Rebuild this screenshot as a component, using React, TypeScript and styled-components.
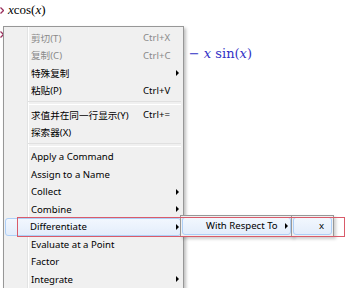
import styled, { createGlobalStyle } from "styled-components"

const GlobalStyle = createGlobalStyle`
  html, body {
    margin: 0;
    padding: 0;
    background: #ffffff;
  }
  * {
    box-sizing: border-box;
  }
`

type MenuEntry =
  | { kind: "sep" }
  | {
      kind: "item"
      label: string
      shortcut?: string
      arrow?: boolean
      disabled?: boolean
      cjk?: boolean
      active?: boolean
    }

const entries: MenuEntry[] = [
  { kind: "item", label: "剪切(T)", shortcut: "Ctrl+X", disabled: true, cjk: true },
  { kind: "item", label: "复制(C)", shortcut: "Ctrl+C", disabled: true, cjk: true },
  { kind: "item", label: "特殊复制", arrow: true, cjk: true },
  { kind: "item", label: "粘贴(P)", shortcut: "Ctrl+V", cjk: true },
  { kind: "sep" },
  { kind: "item", label: "求值并在同一行显示(Y)", shortcut: "Ctrl+=", cjk: true },
  { kind: "item", label: "探索器(X)", cjk: true },
  { kind: "sep" },
  { kind: "item", label: "Apply a Command" },
  { kind: "item", label: "Assign to a Name" },
  { kind: "item", label: "Collect", arrow: true },
  { kind: "item", label: "Combine", arrow: true },
  { kind: "item", label: "Differentiate", arrow: true, active: true },
  { kind: "item", label: "Evaluate at a Point" },
  { kind: "item", label: "Factor" },
  { kind: "item", label: "Integrate", arrow: true },
]

const Sheet = styled.div`
  position: relative;
  width: 347px;
  height: 288px;
  overflow: hidden;
  background: #ffffff;
`

const InputLine = styled.div`
  display: flex;
  align-items: center;
  gap: 4px;
  height: 20px;
`

const PromptRow = styled.div`
  display: flex;
  align-items: center;
  height: 14px;
  margin-top: 7px;
`

const Prompt = () => (
  <svg width="4" height="7" viewBox="0 0 4 7">
    <path d="M0.5 0.5 L3.5 3.5 L0.5 6.5" fill="none" stroke="#9b2f5c" strokeWidth="1.3" />
  </svg>
)

const InputMath = styled.span`
  font-family: "Liberation Serif", serif;
  font-size: 13px;
  color: #000000;
  i {
    font-style: italic;
  }
`

const OutputLine = styled.div`
  height: 20px;
  margin-top: 3px;
  padding-right: 95px;
  text-align: right;
  font-family: "DejaVu Serif", serif;
  font-size: 13px;
  line-height: 20px;
  color: #3131c6;
  i {
    font-style: italic;
  }
`

const Menu = styled.div`
  position: absolute;
  left: 3px;
  top: 26px;
  width: 181px;
  padding: 2px;
  border: 1px solid #979797;
  background:
    linear-gradient(
      to right,
      transparent 0 23px,
      #e2e3e3 23px 24px,
      #ffffff 24px 25px,
      transparent 25px
    ),
    #f0f0f0;
  box-shadow: 2px 2px 3px rgba(0, 0, 0, 0.25);
`

const Row = styled.div<{ $active?: boolean; $disabled?: boolean }>`
  display: grid;
  grid-template-columns: 112px 1fr 12px;
  align-items: center;
  height: 17.5px;
  padding-left: 24px;
  font-family: "Noto Sans", "Noto Sans CJK SC", sans-serif;
  font-size: 9.6px;
  white-space: nowrap;
  color: ${(p) => (p.$disabled ? "#8a8a8a" : "#000000")};
  border: 1px solid ${(p) => (p.$active ? "#aecff7" : "transparent")};
  border-radius: 3px;
  margin-left: ${(p) => (p.$active ? "-1px" : "0")};
  background: ${(p) =>
    p.$active ? "linear-gradient(to bottom, #f2f7fe, #e3edfb)" : "transparent"};
`

const Label = styled.span<{ $cjk?: boolean }>`
  font-size: ${(p) => (p.$cjk ? "9.6px" : "9.6px")};
`

const Shortcut = styled.span``

const Arrow = styled.span`
  justify-self: start;
  margin-left: 8px;
  width: 0;
  height: 0;
  border-top: 3px solid transparent;
  border-bottom: 3px solid transparent;
  border-left: 3px solid #000000;
`

const Separator = styled.div`
  height: 7px;
  margin-left: 22px;
  display: flex;
  align-items: center;
  &::after {
    content: "";
    flex: 1;
    height: 2px;
    border-top: 1px solid #e0e0e0;
    border-bottom: 1px solid #ffffff;
  }
`

const SubMenu = styled.div<{ $left: number; $width: number }>`
  position: absolute;
  top: 215px;
  left: ${(p) => p.$left}px;
  width: ${(p) => p.$width}px;
  padding: 1px;
  border: 1px solid #979797;
  background: #f0f0f0;
  box-shadow: 2px 2px 3px rgba(0, 0, 0, 0.2);
`

const SubItem = styled.div<{ $pad: number }>`
  display: flex;
  align-items: center;
  justify-content: space-between;
  height: 17.5px;
  padding: 0 2px 0 ${(p) => p.$pad}px;
  border: 1px solid #aecff7;
  border-radius: 3px;
  background: linear-gradient(to bottom, #f2f7fe, #e3edfb);
  font-family: "Noto Sans", sans-serif;
  font-size: 9.6px;
  color: #000000;
  white-space: nowrap;
`

const SubArrow = styled(Arrow)`
  margin-left: 0;
`

const Annotation = styled.div`
  position: absolute;
  left: 17px;
  top: 217px;
  width: 328px;
  height: 20px;
  border: 1px solid #d95b6a;
  pointer-events: none;
`

export default function App() {
  return (
    <>
      <GlobalStyle />
      <Sheet>
        <InputLine>
          <Prompt />
          <InputMath>
            <i>x</i>cos(<i>x</i>)
          </InputMath>
        </InputLine>
        <PromptRow>
          <Prompt />
        </PromptRow>
        <OutputLine>
          cos(<i>x</i>) − <i>x</i> sin(<i>x</i>)
        </OutputLine>

        <Menu>
          {entries.map((e, i) =>
            e.kind === "sep" ? (
              <Separator key={i} />
            ) : (
              <Row key={i} $active={e.active} $disabled={e.disabled}>
                <Label $cjk={e.cjk}>{e.label}</Label>
                <Shortcut>{e.shortcut}</Shortcut>
                {e.arrow ? <Arrow /> : <span />}
              </Row>
            )
          )}
        </Menu>

        <SubMenu $left={180} $width={113}>
          <SubItem $pad={23}>
            With Respect To
            <SubArrow />
          </SubItem>
        </SubMenu>
        <SubMenu $left={291} $width={43}>
          <SubItem $pad={25}>x</SubItem>
        </SubMenu>

        <Annotation />
      </Sheet>
    </>
  )
}
